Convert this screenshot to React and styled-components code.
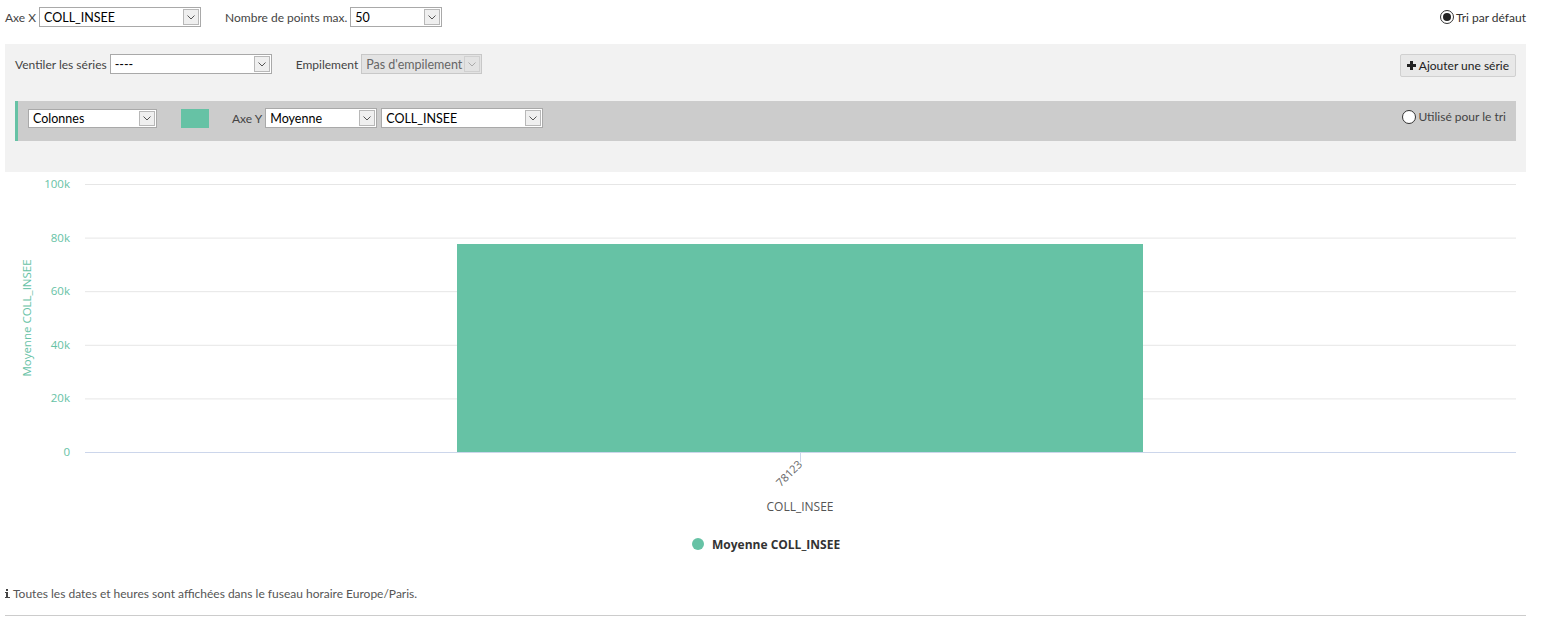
import React from "react"
import styled, { createGlobalStyle } from "styled-components"

const GlobalStyle = createGlobalStyle`
  body {
    margin: 0;
    font-family: Lato, "Open Sans", sans-serif;
    font-size: 12px;
    color: #333;
    background: #fff;
  }
`

const Page = styled.div`
  width: 1521px;
  padding: 0 15px 0 5px;
`

const TopBar = styled.div`
  display: flex;
  align-items: center;
  height: 34px;
`

const Field = styled.label`
  display: flex;
  align-items: center;
  gap: 3px;
  margin-right: ${(p) => p.$gap || 0}px;
  color: #444;
  white-space: nowrap;
`

const SelectBox = styled.div`
  display: flex;
  align-items: center;
  width: ${(p) => p.$w}px;
  height: ${(p) => p.$h || 20}px;
  box-sizing: border-box;
  border: 1px solid ${(p) => (p.$disabled ? "#c8c8c8" : "#a9a9a9")};
  background: ${(p) => (p.$disabled ? "#e3e3e3" : "#fff")};
  color: ${(p) => (p.$disabled ? "#666" : "#000")};
  padding-left: 4px;
  font-size: 12.5px;
`

const SelectText = styled.span`
  flex: 1;
  overflow: hidden;
  white-space: nowrap;
`

const Arrow = styled.span`
  display: flex;
  align-items: center;
  justify-content: center;
  width: 16px;
  align-self: stretch;
  margin: 1px;
  box-sizing: border-box;
  border: 1px solid ${(p) => (p.$disabled ? "#d0d0d0" : "#b8b8b8")};
  background: ${(p) => (p.$disabled ? "#e3e3e3" : "#efefef")};
`

function Select({ w, h, value, disabled }) {
  return (
    <SelectBox $w={w} $h={h} $disabled={disabled}>
      <SelectText>{value}</SelectText>
      <Arrow $disabled={disabled}>
        <svg width="8" height="5" viewBox="0 0 8 5">
          <path d="M0.5 0.5 L4 4 L7.5 0.5" fill="none" stroke={disabled ? "#aaa" : "#555"} strokeWidth="1" />
        </svg>
      </Arrow>
    </SelectBox>
  )
}

const Spacer = styled.div`
  flex: 1;
`

const Radio = styled.label`
  display: flex;
  align-items: center;
  gap: 2px;
  color: #333;
  white-space: nowrap;
`

const RadioDot = styled.span`
  width: 12px;
  height: 12px;
  border-radius: 50%;
  border: 1px solid #333;
  background: #fff;
  display: flex;
  align-items: center;
  justify-content: center;
  &::after {
    content: "";
    width: 8px;
    height: 8px;
    border-radius: 50%;
    background: ${(p) => (p.$checked ? "#222" : "transparent")};
  }
`

const Panel = styled.div`
  margin-top: 10px;
  background: #f2f2f2;
  padding: 10px 10px 31px 10px;
`

const PanelRow = styled.div`
  display: flex;
  align-items: flex-start;
  height: 47px;
`

const AddButton = styled.button`
  display: flex;
  align-items: center;
  gap: 3px;
  height: 23px;
  padding: 0 6px 0 6px;
  border: 1px solid #d0d0d0;
  background: #e8e8e8;
  font-family: inherit;
  font-size: 12px;
  color: #222;
  border-radius: 2px;
`

const SeriesBar = styled.div`
  display: flex;
  align-items: flex-start;
  height: 40px;
  box-sizing: border-box;
  padding: 7px 10px 0 10px;
  background: #cccccc;
  border-left: 3px solid #66c2a5;
`

const SeriesLead = styled.div`
  display: flex;
  align-items: center;
  margin-top: 1px;
`

const Swatch = styled.div`
  width: 28px;
  height: 19px;
  background: #66c2a5;
  margin: 0 23px 0 24px;
`

const SeriesRadio = styled(Radio)`
  margin-top: 1px;
  color: #444;
`

const ChartWrap = styled.div`
  height: 400px;
`

const Footer = styled.div`
  display: flex;
  align-items: center;
  gap: 3px;
  margin-top: 14px;
  padding-bottom: 14px;
  border-bottom: 1px solid #ccc;
  color: #555;
`

const ticks = [100, 80, 60, 40, 20, 0]

function Chart() {
  const x0 = 80
  const x1 = 1511
  const top = 12
  const bottom = 280
  const y = (v) => bottom - ((bottom - top) * v) / 100
  const green = "#66c2a5"
  const barTop = 72
  return (
    <svg width="1521" height="400" viewBox="0 0 1521 400" fontFamily='"Open Sans", "Noto Sans", sans-serif'>
      {ticks.map((t) => (
        <g key={t}>
          <line x1={x0} x2={x1} y1={y(t) + 0.5} y2={y(t) + 0.5} stroke={t === 0 ? "#ccd6eb" : "#e6e6e6"} />
          <text x="65" y={y(t) + 4} textAnchor="end" fontSize="11.5" fill={green}>
            {t === 0 ? "0" : `${t}k`}
          </text>
        </g>
      ))}
      <text transform="translate(26 146) rotate(-90)" textAnchor="middle" fontSize="11.5" fill={green}>
        Moyenne COLL_INSEE
      </text>
      <rect x="452" y={barTop} width="686" height={bottom - barTop} fill={green} />
      <line x1={x0} x2={x1} y1={bottom + 0.5} y2={bottom + 0.5} stroke="#ccd6eb" />
      <line x1="795.5" x2="795.5" y1={bottom} y2={bottom + 10} stroke="#ccd6eb" />
      <text transform="translate(798 293) rotate(-45)" textAnchor="end" fontSize="11" fill="#666">
        78123
      </text>
      <text x="795" y="339" textAnchor="middle" fontSize="12" fill="#555">
        COLL_INSEE
      </text>
      <circle cx="693" cy="372" r="6" fill={green} />
      <text x="707" y="377" fontSize="12" fontWeight="bold" fill="#333">
        Moyenne COLL_INSEE
      </text>
    </svg>
  )
}

export default function App() {
  return (
    <Page>
      <GlobalStyle />
      <TopBar>
        <Field $gap={24}>
          Axe X
          <Select w={162} value="COLL_INSEE" />
        </Field>
        <Field>
          Nombre de points max.
          <Select w={92} value="50" />
        </Field>
        <Spacer />
        <Radio>
          <RadioDot $checked />
          Tri par défaut
        </Radio>
      </TopBar>
      <Panel>
        <PanelRow>
          <Field $gap={24}>
            Ventiler les séries
            <Select w={162} value="----" />
          </Field>
          <Field>
            Empilement
            <Select w={121} value="Pas d'empilement" disabled />
          </Field>
          <Spacer />
          <AddButton>
            <svg width="9" height="9" viewBox="0 0 9 9">
              <path d="M3 0h3v3h3v3H6v3H3V6H0V3h3z" fill="#222" />
            </svg>
            Ajouter une série
          </AddButton>
        </PanelRow>
        <SeriesBar>
          <SeriesLead>
            <Select w={129} h={19} value="Colonnes" />
            <Swatch />
          </SeriesLead>
          <Field $gap={4}>
            Axe Y
            <Select w={112} value="Moyenne" />
          </Field>
          <Select w={162} value="COLL_INSEE" />
          <Spacer />
          <SeriesRadio>
            <RadioDot />
            Utilisé pour le tri
          </SeriesRadio>
        </SeriesBar>
      </Panel>
      <ChartWrap>
        <Chart />
      </ChartWrap>
      <Footer>
        <svg width="5" height="9" viewBox="0 0 5 9">
          <rect x="1" y="0" width="2" height="2" fill="#444" />
          <path d="M0 3h3v5h2v1H0V8h1V4H0z" fill="#444" />
        </svg>
        Toutes les dates et heures sont affichées dans le fuseau horaire Europe/Paris.
      </Footer>
    </Page>
  )
}
